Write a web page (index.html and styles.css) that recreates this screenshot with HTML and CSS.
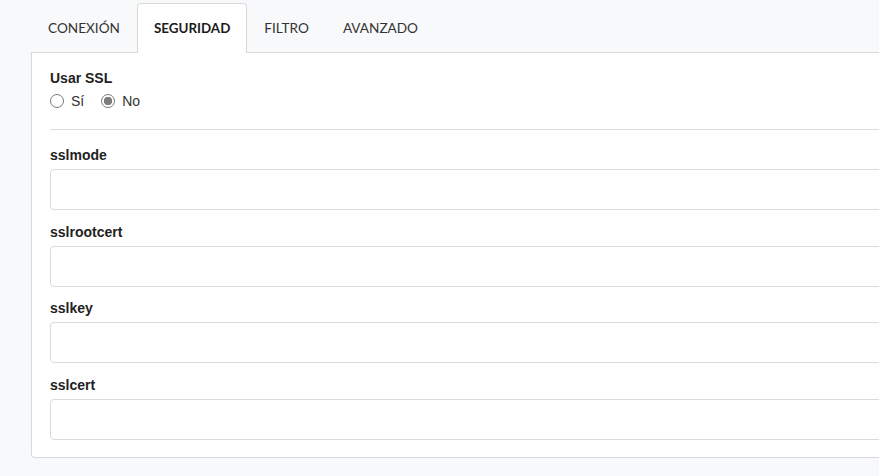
FILE: index.html
```html
<!DOCTYPE html>
<html lang="es">
<head>
  <meta charset="UTF-8">
  <meta name="viewport" content="width=device-width, initial-scale=1.0">
  <title>Seguridad</title>
  <link rel="stylesheet" href="styles.css">
</head>
<body>
  <div class="container">
    <ul class="tabs">
      <li class="tab">Conexión</li>
      <li class="tab active">Seguridad</li>
      <li class="tab">Filtro</li>
      <li class="tab">Avanzado</li>
    </ul>

    <div class="panel">
      <div class="ssl-group">
        <label class="field-label">Usar SSL</label>
        <div class="radio-row">
          <label class="radio"><input type="radio" name="ssl" value="si"> Sí</label>
          <label class="radio"><input type="radio" name="ssl" value="no" checked> No</label>
        </div>
      </div>

      <hr>

      <div class="field">
        <label class="field-label" for="sslmode">sslmode</label>
        <input type="text" id="sslmode">
      </div>
      <div class="field">
        <label class="field-label" for="sslrootcert">sslrootcert</label>
        <input type="text" id="sslrootcert">
      </div>
      <div class="field">
        <label class="field-label" for="sslkey">sslkey</label>
        <input type="text" id="sslkey">
      </div>
      <div class="field">
        <label class="field-label" for="sslcert">sslcert</label>
        <input type="text" id="sslcert">
      </div>
    </div>
  </div>
</body>
</html>
```

FILE: styles.css
```css
html, body {
  overflow: hidden;
}
body {
  margin: 0;
  padding: 3px 0 0 31px;
  font-family: 'Liberation Sans', Arial, sans-serif;
  font-size: 14px;
  color: #222;
  background-color: #f8f9fa;
}
.container {
  width: 920px;
}
.tabs {
  display: flex;
  margin: 0;
  padding: 0;
  list-style: none;
  border-bottom: 1px solid #d9d9d9;
}
.tab {
  padding: 14px 16px;
  line-height: 20px;
  font-family: 'Lato', sans-serif;
  font-size: 13.6px;
  text-transform: uppercase;
  color: #333;
  border: 1px solid transparent;
  border-bottom: none;
  border-radius: 4px 4px 0 0;
  margin-bottom: -1px;
  cursor: pointer;
}
.tab.active {
  background-color: #fff;
  border-color: #d9d9d9;
  font-weight: bold;
  font-size: 13.4px;
  color: #1c1c1c;
  padding-bottom: 15px;
}
.panel {
  background: #fff;
  border: 1px solid #d9d9d9;
  border-top: none;
  border-radius: 0 0 4px 4px;
  padding: 17px 18px 17px;
}
.field-label {
  display: block;
  font-weight: bold;
  line-height: 17px;
}
.radio-row {
  display: flex;
  gap: 17px;
  margin-top: 4px;
}
.radio {
  display: flex;
  align-items: center;
  gap: 7px;
  line-height: 20px;
  color: #333;
}
.radio input {
  appearance: none;
  margin: 0;
  width: 14px;
  height: 14px;
  border: 1px solid #7a7a7a;
  border-radius: 50%;
  background: #fff;
}
.radio input:checked {
  background: radial-gradient(circle, #7d7d7d 0 4px, #fff 4.5px);
}
hr {
  border: none;
  border-top: 1px solid #dcdcdc;
  margin: 18px 0 17px;
}
.field + .field {
  margin-top: 13.6px;
}
.field input {
  display: block;
  box-sizing: border-box;
  width: 100%;
  height: 41px;
  margin-top: 5px;
  padding: 6px 12px;
  border: 1px solid #dadada;
  border-radius: 4px;
  font-size: 14px;
}
```
